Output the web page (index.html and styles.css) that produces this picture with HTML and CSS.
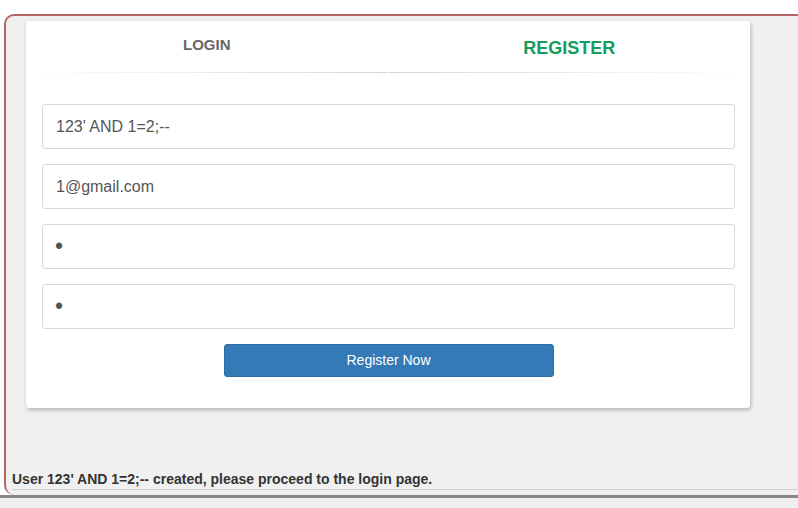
FILE: index.html
```html
<!DOCTYPE html>
<html lang="en">
<head>
    <meta charset="UTF-8">
    <meta name="viewport" content="width=device-width, initial-scale=1.0">
    <title>Register</title>
    <link rel="stylesheet" href="styles.css">
</head>
<body>
    <div class="frame">
        <div class="card">
            <div class="tabs">
                <div class="tab">LOGIN</div>
                <div class="tab active">REGISTER</div>
            </div>
            <form class="form" onsubmit="return false">
                <input type="text" class="field" value="123' AND 1=2;--">
                <input type="email" class="field" value="1@gmail.com">
                <input type="password" class="field pass" value="1">
                <input type="password" class="field pass" value="1">
                <button class="btn">Register Now</button>
            </form>
        </div>
        <p class="message">User 123' AND 1=2;-- created, please proceed to the login page.</p>
    </div>
    <div class="statusbar"></div>
</body>
</html>
```

FILE: styles.css
```css
html, body {
    margin: 0;
    height: 100%;
}

body {
    background: #fff;
    font-family: "Liberation Sans", Arial, sans-serif;
    display: flex;
    flex-direction: column;
}

.frame {
    margin: 14px 0 0 4px;
    height: 479px;
    border-top: 2px solid #b36767;
    border-left: 2px solid #b36767;
    border-radius: 10px 0 0 10px;
    background: #f0f0f0;
    display: flex;
    flex-direction: column;
}

.card {
    width: 724px;
    margin: 5px 0 0 20px;
    background: #fff;
    border-radius: 3px;
    box-shadow: 1px 2px 4px rgba(0, 0, 0, 0.25);
}

.tabs {
    display: flex;
    height: 52px;
}

.tab {
    flex: 1;
    text-align: center;
    font-size: 15px;
    line-height: 1;
    font-weight: bold;
    color: #666;
    padding-top: 16px;
    box-sizing: border-box;
    border-bottom: 1px solid transparent;
    border-image: linear-gradient(to right, rgba(216, 216, 216, 0), #d6d6d6) 1;
    margin-right: 1px;
}

.tab.active {
    font-size: 18px;
    color: #139d5c;
    padding-top: 18px;
    margin-right: 0;
    border-image: linear-gradient(to right, #d6d6d6, rgba(216, 216, 216, 0)) 1;
}

.form {
    padding: 31px 15px 31px 16px;
    display: flex;
    flex-direction: column;
    margin: 0;
}

.field {
    height: 45px;
    box-sizing: border-box;
    margin: 0 0 15px;
    padding: 0 13px;
    border: 1px solid #dadada;
    border-radius: 3px;
    font-family: "Liberation Sans", Arial, sans-serif;
    font-size: 16px;
    color: #555;
    background: #fff;
    outline: none;
}

.field.pass {
    font-size: 23px;
    padding-left: 12px;
}

.btn {
    align-self: center;
    width: 330px;
    height: 33px;
    padding: 0 0 1px;
    border: 1px solid #2e6da4;
    border-radius: 3px;
    background: #337ab7;
    color: #fff;
    font-family: "Liberation Sans", Arial, sans-serif;
    font-size: 14px;
}

.message {
    margin: auto 0 5px 6px;
    padding-bottom: 2px;
    border-bottom: 1px solid #cfcfcf;
    font-size: 14px;
    line-height: 16px;
    font-weight: bold;
    color: #333;
}

.statusbar {
    flex: 1;
    border-top: 3px solid #888;
    background: #f0f0f0;
}
```
